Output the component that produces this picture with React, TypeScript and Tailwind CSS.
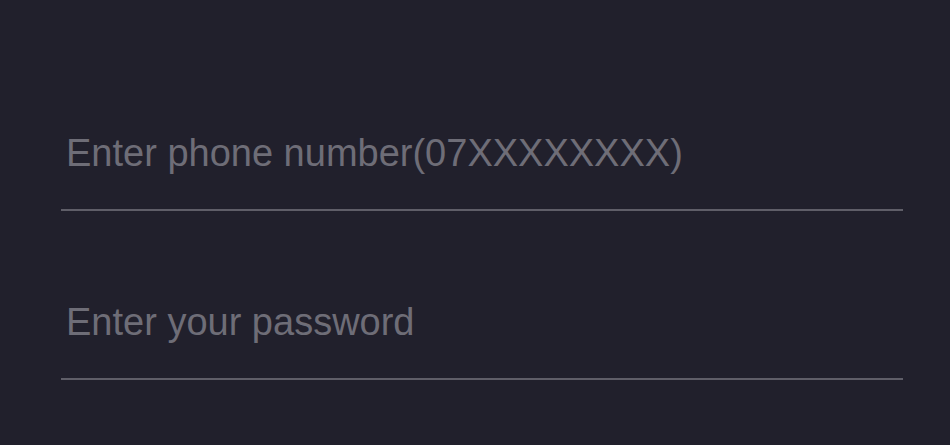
const fieldClass =
  "h-[114px] w-full border-b-2 border-[#5f5e68] bg-transparent pl-[5px] text-[38px] text-[#d4d3da] placeholder:text-[#6e6d77] outline-none";

const App = () => {
  return (
    <div
      className="min-h-[445px] w-full bg-[#21202c] pt-[97px]"
      style={{ fontFamily: '"Liberation Sans", Arial, sans-serif' }}
    >
      <form className="ml-[61px] flex w-[842px] flex-col gap-[55px]">
        <input type="tel" placeholder="Enter phone number(07XXXXXXXX)" className={fieldClass} />
        <input type="password" placeholder="Enter your password" className={fieldClass} />
      </form>
    </div>
  );
};

export default App;
